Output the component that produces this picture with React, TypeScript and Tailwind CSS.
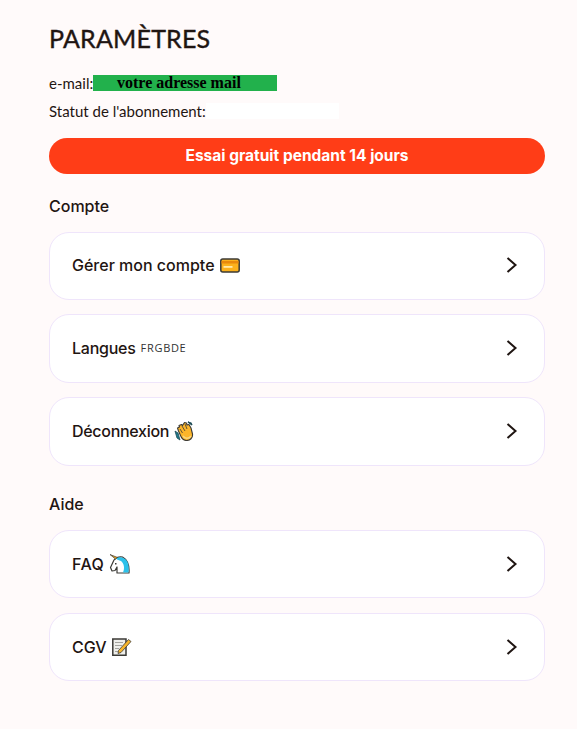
const Chevron = () => (
  <svg width="14" height="16" viewBox="0 0 14 16" fill="none" className="shrink-0">
    <path d="M2.5 1 L10.500 8 L2.500 15" stroke="#1f1512" strokeWidth="2" />
  </svg>
);

const Card = () => (
  <svg width="20" height="15" viewBox="0 0 20 15" className="shrink-0">
    <rect x="0.800" y="1" width="18.400" height="13" rx="2" fill="#fbb11c" stroke="#3b3a36" strokeWidth="1.500" />
    <rect x="1.500" y="3" width="17" height="2.500" fill="#e8890c" />
    <rect x="3.500" y="8" width="9" height="1.800" fill="#ffeaa8" />
  </svg>
);

const Wave = () => (
  <svg width="20" height="20" viewBox="0 0 20 20" className="shrink-0">
    <path d="M1 10 L3 17 L6 19 L4 12 Z" fill="#1f7c8c" stroke="#1d4a55" strokeWidth="0.800" />
    <path d="M14 1 L18 4 L17 2 Z" fill="#1f7c8c" stroke="#1d4a55" strokeWidth="1.200" />
    <path d="M4.500 10 L3.500 7 L5.500 6 L5 4.500 L7.500 3.500 L8.500 4.500 L10.500 1.500 L12.500 2 L13 4 L15 3.500 L17 7 L18.500 13 C19 17 16 19.500 12.500 19.500 C9 19.500 7.500 17 6.500 14.500 Z" fill="#fbb52a" stroke="#3b3a36" strokeWidth="1.100" strokeLinejoin="round" />
    <path d="M6 8 L8.500 12 M8 5 L11 10 M11 3 L13 8" stroke="#3b3a36" strokeWidth="0.800" fill="none" />
    <path d="M9 15 C11 18 15 18 17 15" stroke="#f9d77e" strokeWidth="1.500" fill="none" />
  </svg>
);

const Unicorn = () => (
  <svg width="21" height="20" viewBox="0 0 21 20" className="shrink-0">
    <path d="M5 6 L1.500 13.500 L3 17 L6 16.500 L8 13 L8 19 L20 19 C20.500 12 19 6 13.500 3 C10 2.500 7 3.500 5 6 Z" fill="#fff" stroke="#3b3a36" strokeWidth="1.200" strokeLinejoin="round" />
    <path d="M7 4.500 C10 2.500 15 3 18 7 C20 10 20 15 19.500 18.500 L14 18.500 C16 14 15 9.500 12 7 C10 6 8.500 6 7 4.500 Z" fill="#2cc1ea" />
    <path d="M6.500 5 L1 0.500 L8.500 3.500 Z" fill="#f0a81e" stroke="#3b3a36" strokeWidth="0.700" />
    <rect x="6" y="9" width="1.500" height="1.500" fill="#3b3a36" />
  </svg>
);

const Memo = () => (
  <svg width="20" height="18" viewBox="0 0 20 18" className="shrink-0">
    <path d="M0.800 1 H14 V17.200 H0.800 Z" fill="#efefeb" stroke="#3b3a36" strokeWidth="1.500" />
    <path d="M3 4.500 H11 M3 7.500 H10 M3 10.500 H7 M3 13.500 H6" stroke="#a3a39e" strokeWidth="1.200" />
    <path d="M6.500 12.500 L16.500 1.500 L19 3.500 L9 14.500 L6 15.500 Z" fill="#f7b52a" stroke="#3b3a36" strokeWidth="0.800" />
  </svg>
);

const Row = ({ children }: { children: React.ReactNode }) => (
  <div className="flex h-[68.500px] items-center justify-between rounded-[20px] border border-[#efe5fb] bg-white pb-px pl-[22px] pr-[25px]">
    <div className="flex items-center gap-[5px] text-[16px] font-medium text-[#1f1512]">{children}</div>
    <Chevron />
  </div>
);

export default function App() {
  return (
    <div className="min-h-[729px] bg-[#fffafa] pl-[49px] pr-[32px] pt-[22px] font-['Inter',sans-serif] text-[#1f1512]">
      <h1 className="text-[25px] leading-[32px] font-normal tracking-[0.2px] font-['Lato',sans-serif] [-webkit-text-stroke:0.4px_#1f1512]">PARAMÈTRES</h1>
      <div className="mt-[21px] flex h-4 items-center text-[15px] font-['Lato',sans-serif]">
        <span className="w-11 whitespace-nowrap">e-mail:</span>
        <span className="flex h-4 w-[184px] items-center bg-[#22b14c] pl-6 font-['Liberation_Serif',serif] text-[16px] font-bold text-black">votre adresse mail</span>
      </div>
      <div className="mt-3 flex h-4 items-center text-[15px] font-['Lato',sans-serif]">
        <span className="whitespace-nowrap">Statut de l'abonnement:</span>
        <span className="h-4 w-[133px] bg-white" />
      </div>
      <div className="mt-[19px] flex h-9 items-center justify-center rounded-full bg-[#ff3d17] text-[15.500px] font-bold text-white">
        Essai gratuit pendant 14 jours
      </div>
      <h2 className="mt-[22px] text-[16px] leading-5 font-medium">Compte</h2>
      <div className="mt-[15.500px] flex flex-col gap-[14.400px]">
        <Row>Gérer mon compte <Card /></Row>
        <Row>
          <span className="tracking-[-0.25px]">Langues</span>
          <span className="font-['Open_Sans',sans-serif] text-[11px] font-normal tracking-[0.7px] text-[#333]">FRGBDE</span>
        </Row>
        <Row><span className="tracking-[-0.3px]">Déconnexion</span> <Wave /></Row>
      </div>
      <h2 className="mt-[28px] text-[16px] leading-5 font-medium">Aide</h2>
      <div className="mt-[16.200px] flex flex-col gap-[14.500px]">
        <Row><span className="tracking-[0.4px]">FAQ</span> <Unicorn /></Row>
        <Row>CGV <Memo /></Row>
      </div>
    </div>
  );
}
